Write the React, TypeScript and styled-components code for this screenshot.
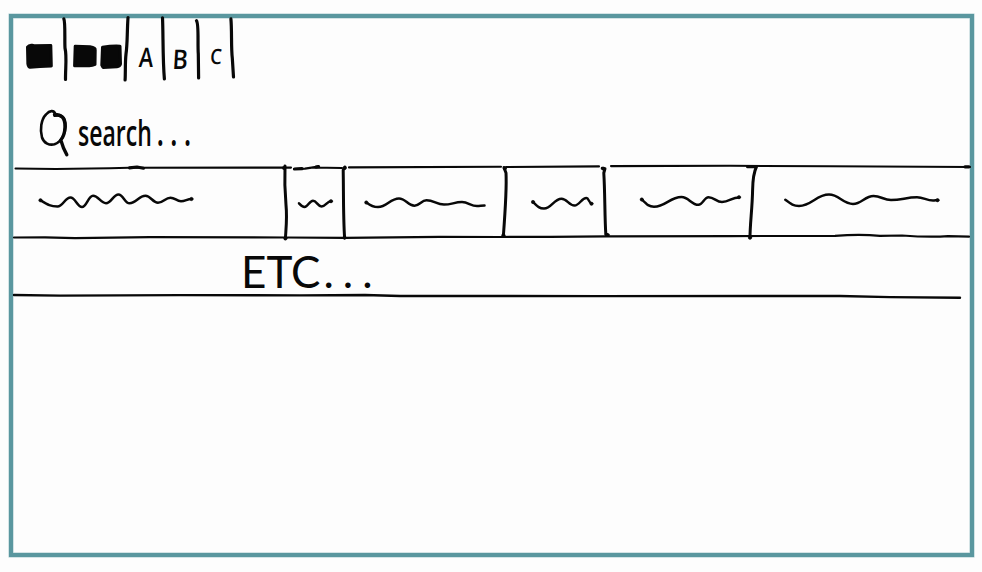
import React from "react";
import styled, { createGlobalStyle } from "styled-components";

const GlobalStyle = createGlobalStyle`
  * { box-sizing: border-box; }
  body { margin: 0; background: #fdfdfd; }
`;

const INK = "#080808";

const Page = styled.div`
  width: 982px;
  height: 572px;
  padding: 14px 8px 15px 9px;
  background: #fdfdfd;
  overflow: hidden;
`;

const Frame = styled.main`
  display: flex;
  flex-direction: column;
  width: 965px;
  height: 543px;
  border: 4px solid #5a979f;
  box-shadow: 0 0 0 0.5px #a9cace, inset 0 0 0 0.5px #a9cace;
  color: ${INK};
`;

const Toolbar = styled.nav`
  display: flex;
  height: 66px;
`;

const ToolButton = styled.div<{ $width: number; $lift?: number; $size: number; $squeeze: number }>`
  display: flex;
  justify-content: center;
  width: ${(p) => p.$width}px;
  height: 66px;
  padding-top: ${(p) => p.$lift ?? 0}px;
  font: 600 ${(p) => p.$size}px/30px "Open Sans", sans-serif;

  span {
    display: block;
    transform: scaleX(${(p) => p.$squeeze}) skewX(-4deg);
  }
`;

const SearchBar = styled.div`
  display: flex;
  height: 78px;
  padding-left: 25px;
`;

const SearchText = styled.span`
  display: block;
  width: 130px;
  padding: 29px 0 0 8px;
  font: 600 36px/40px "Open Sans", sans-serif;
  white-space: nowrap;
  transform: scaleX(0.64);
  transform-origin: 8px 50%;
`;

const SearchDots = styled.span`
  margin-left: 8px;
  font-weight: 700;
  letter-spacing: 11px;
`;

const Row = styled.div<{ $height: number }>`
  display: flex;
  height: ${(p) => p.$height}px;
`;

const MoreText = styled.span`
  display: block;
  padding: 0 0 0 228px;
  font: 400 44px/48px "Open Sans", sans-serif;
  font-family: Lato, sans-serif;
  white-space: nowrap;
`;

const MoreDots = styled.span`
  margin-left: 3px;
  letter-spacing: 9px;
`;

const Drawing = styled.svg`
  display: block;
  flex: none;
  overflow: visible;
  fill: none;
  stroke: ${INK};
  stroke-linecap: round;
  stroke-linejoin: round;
`;

type Point = [number, number];

interface SketchProps {
  x: number;
  y: number;
  w: number;
  h: number;
  children: React.ReactNode;
}

function Sketch({ x, y, w, h, children }: SketchProps) {
  return (
    <Drawing width={w} height={h} viewBox={`${x} ${y} ${w} ${h}`} aria-hidden="true">
      {children}
    </Drawing>
  );
}

// Joins crests and troughs with level tangents at every point.
function wave(points: Point[]) {
  return points.reduce((d, [x, y], i) => {
    if (i === 0) return `M${x} ${y}`;
    const [px, py] = points[i - 1];
    const m = (x - px) * 0.42;
    const start = i === 1 ? `${px + m} ${py + (y - py) * 0.7}` : `${px + m} ${py}`;
    return `${d} C${start} ${x - m} ${y} ${x} ${y}`;
  }, "");
}

function ToolDivider({ x, w, d }: { x: number; w: number; d: string }) {
  return (
    <Sketch x={x} y={18} w={w} h={66}>
      <path d={d} strokeWidth="3.2" />
    </Sketch>
  );
}

interface Column {
  x: number;
  w: number;
  points: Point[];
  edge?: string;
  caps?: Point[];
}

const columns: Column[] = [
  {
    x: 13, w: 273,
    points: [[40.5, 200.3], [57.5, 206.5], [70.5, 197.5], [82, 207], [93, 195.7], [106, 203.2], [118.5, 194.5], [129.5, 203.3], [145.5, 195.8], [158, 202.7], [170.5, 197.7], [181, 201.2], [191.5, 199]],
    edge: "M285 166C284.4 181 284.9 192 286 205C287.3 218 286 228 285.4 238.5",
    caps: [[40.5, 200.3], [191.5, 199], [284, 168], [285.4, 238.5]],
  },
  {
    x: 286, w: 58,
    points: [[299, 203.3], [304.5, 207], [313, 200.7], [321.5, 206.5], [331, 201.2]],
    edge: "M345 167L343.2 170C343.6 192 343.2 218 344.6 237.7",
    caps: [[344.7, 168], [344.6, 237.7], [331, 201.2]],
  },
  {
    x: 344, w: 161,
    points: [[366.3, 202.5], [378, 207.1], [399, 198.5], [414.5, 205.7], [426.5, 200.2], [444, 204.6], [462, 202.1], [477, 206], [484.5, 205.6]],
    edge: "M504 167.5L506 173C506.8 187 505 214 503.4 235.5",
    caps: [[366.3, 202.5], [504.8, 168.5], [503.4, 235.3]],
  },
  {
    x: 505, w: 100,
    points: [[533, 202], [544, 208.5], [561.5, 198.7], [574.5, 205.5], [586.5, 198], [591.5, 203.5]],
    edge: "M602.2 168.2L605 168.7L603.8 173C605 192 604.7 218 605.8 234L608.3 235",
    caps: [[533, 202], [591.5, 203.7], [603.5, 168.7], [606.5, 234.7]],
  },
  {
    x: 605, w: 147,
    points: [[641.8, 199.5], [654, 206.7], [681.5, 197], [698.5, 204.8], [708.5, 197.3], [722, 202], [739, 197.4]],
    edge: "M747.5 166.7L756.5 166.7C754.3 171 752.8 179 752.6 190C752.3 208 750 224 750 237.5",
    caps: [[641.8, 199.5], [739, 197.2], [750, 237.7]],
  },
  {
    x: 752, w: 218,
    points: [[785.3, 199.8], [799, 206], [829, 194.6], [853, 204], [873.5, 196], [891, 200], [917, 197.3], [933, 200.5], [938, 200]],
    caps: [[937.5, 200.2]],
  },
];

function Cell({ x, w, points, edge, caps }: Column) {
  return (
    <Sketch x={x} y={168} w={w} h={69}>
      <path d={wave(points)} strokeWidth="2.5" />
      {edge && <path d={edge} strokeWidth="3" />}
      {caps?.map(([cx, cy]) => (
        <circle key={`${cx}-${cy}`} cx={cx} cy={cy} r="1.7" fill={INK} strokeWidth="0.5" />
      ))}
    </Sketch>
  );
}

export default function App() {
  return (
    <>
      <GlobalStyle />
      <Page>
        <Frame>
          <Toolbar>
            <Sketch x={13} y={18} w={46} h={66}>
              <path fill={INK} strokeWidth="3" d="M27.5 47Q29 44.8 32 45.2L34 45.8L50.8 45.5L51.3 66L40 66.5L30 67.3Q27.5 66.5 27.8 61Z" />
            </Sketch>
            <ToolDivider x={59} w={12} d="M63.8 18.8C65.5 22 64.5 40 65 48C67 56 65.4 68 65.5 79.5" />
            <Sketch x={71} y={18} w={48} h={66}>
              <path fill={INK} strokeWidth="3" d="M75.2 46.3L90 46.8Q95.5 47.5 95.2 50L95 64.5Q92 66 88 65.7L74.6 65.7Z" />
              <path fill={INK} strokeWidth="3" d="M102.5 47.2Q112 45.8 120 46.2L120.5 64Q120 66.5 117 66.7L103 67.4L101.8 65Z" />
            </Sketch>
            <ToolDivider x={119} w={12} d="M128 17.5C127 33 127.5 44 126 54C125 63 125.6 72 125.1 80" />
            <ToolButton $width={29} $lift={24} $size={27} $squeeze={0.8}><span>A</span></ToolButton>
            <ToolDivider x={160} w={8} d="M162.5 17.8C163.3 34 162.6 58 164.4 79" />
            <ToolButton $width={23} $lift={26} $size={27} $squeeze={0.86}><span>B</span></ToolButton>
            <ToolDivider x={191} w={12} d="M196.5 20.8C199 24 197.5 44 198.3 54L198.6 78" />
            <ToolButton $width={26} $lift={23} $size={21} $squeeze={0.88}><span>C</span></ToolButton>
            <ToolDivider x={229} w={8} d="M230.9 18.8C232 30 231 48 232.3 58L233.5 77" />
          </Toolbar>

          <SearchBar>
            <Sketch x={38} y={84} w={32} h={78}>
              <path strokeWidth="2.6" d="M55.5 114.5C54 109.5 49.5 110.5 46 114.5C41 119.5 39.8 130 42 137.5C44 143.5 49.5 145.5 54.5 144.3C61 142 65.5 134 65.6 126.5C65.8 118 62.2 114 54.5 115.8" />
              <path strokeWidth="3.4" d="M54.5 114.5C61 114.5 65.2 117 65 127C64.8 133 63 137.5 60.8 140L63.5 148L66.8 154.8" />
            </Sketch>
            <SearchText>search<SearchDots>...</SearchDots></SearchText>
          </SearchBar>

          <Sketch x={13} y={162} w={957} h={6}>
            <path strokeWidth="2.1" d="M15.5 168.5Q65 169.7 129 167.8L291 167.6M294 169L305 168.6L318 166.6M312 167.5L342 168M349 167.4L501 166.7M506 167L599 166.4M611 166.1L730 165.8L830 166.2L970 167" />
            <path strokeWidth="3.2" d="M129.5 167.8L137 167L143.5 168.2M294.5 169L302 168.7M316 167L318.5 166.5M965 166.8L969 166.8" />
          </Sketch>

          <Row $height={69}>
            {columns.map((column) => (
              <Cell key={column.x} {...column} />
            ))}
          </Row>

          <Sketch x={13} y={237} w={957} h={10}>
            <path strokeWidth="2.2" d="M14 237.5L45 237.4L75 238.2L150 237.2L286 237.5L345 237.8L440 236.9L500 237L550 236.8L606 236.3L730 236.1L835 235.8Q860 233.8 880 235.8L902 235.5Q930 237.5 948 236.1L969 236.7" />
          </Sketch>

          <Row $height={48}>
            <MoreText>ETC<MoreDots>...</MoreDots></MoreText>
          </Row>

          <Sketch x={13} y={295} w={957} h={6}>
            <path strokeWidth="2.4" d="M14 295L60 295.6L180 295.1L300 295.4L365 295L400 296L600 296.1L840 296L890 297.1L960 297.7" />
          </Sketch>
        </Frame>
      </Page>
    </>
  );
}
